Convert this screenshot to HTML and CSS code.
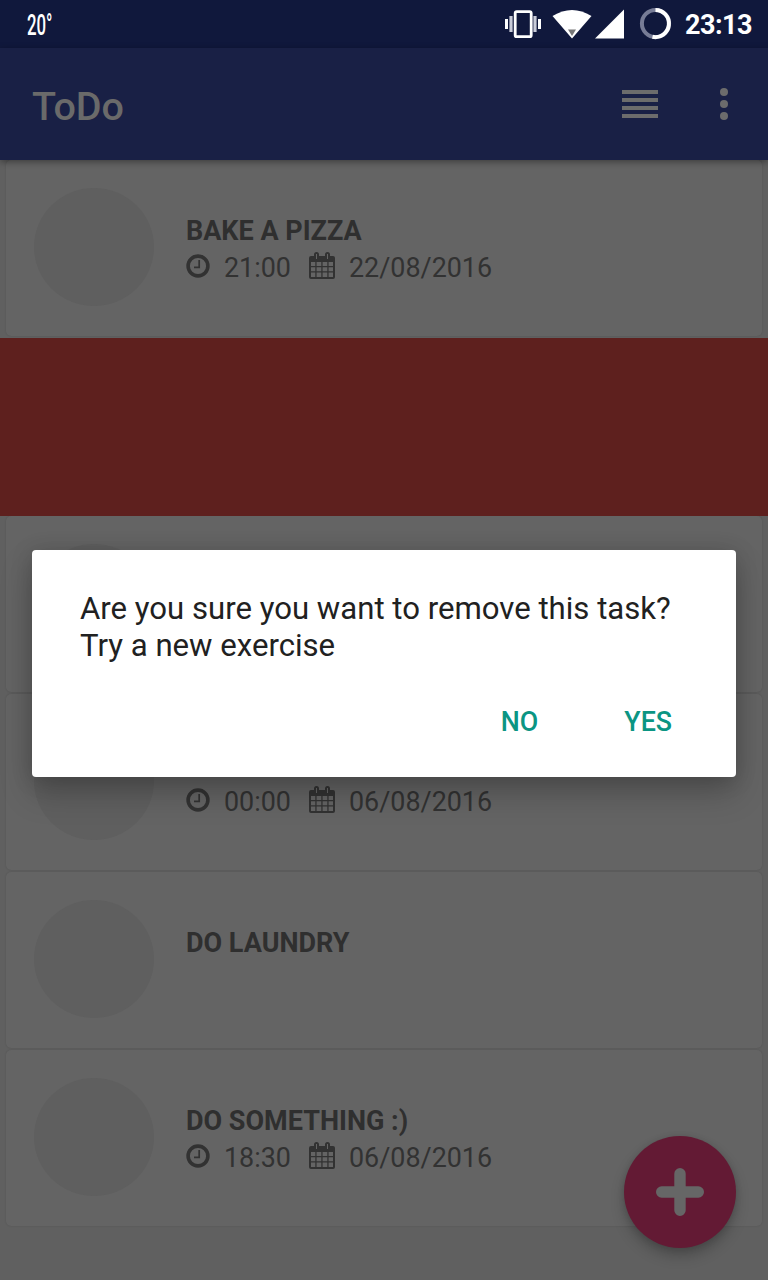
FILE: index.html
```html
<!DOCTYPE html>
<html lang="en">
<head>
<meta charset="utf-8">
<title>ToDo</title>
<link rel="stylesheet" href="styles.css">
</head>
<body>
<svg width="0" height="0" class="defs" aria-hidden="true">
  <symbol id="clock" viewBox="0 0 24 24">
    <circle cx="12" cy="12" r="9.900" fill="none" stroke="currentColor" stroke-width="3.600"/>
    <path d="M13.200 6v7.300H8" fill="none" stroke="currentColor" stroke-width="1.700"/>
  </symbol>
  <symbol id="calendar" viewBox="0 0 26 28">
    <path fill="currentColor" fill-rule="evenodd" d="M2 4h3V2.500a2.500 2.500 0 0 1 5 0V4h6V2.500a2.500 2.500 0 0 1 5 0V4h3a2 2 0 0 1 2 2v19a2 2 0 0 1-2 2H2a2 2 0 0 1-2-2V6a2 2 0 0 1 2-2zM7 2v5h1V2zM18 2v5h1V2zM2 10v4h4.300v-4zM7.600 10v4h4.700v-4zM13.600 10v4h4.700v-4zM19.600 10v4H24v-4zM2 15.300v4h4.300v-4zM7.600 15.300v4h4.700v-4zM13.600 15.300v4h4.700v-4zM19.600 15.300v4H24v-4zM2 20.600V25h4.300v-4.400zM7.600 20.600V25h4.700v-4.400zM13.600 20.600V25h4.700v-4.400zM19.600 20.600V25H24v-4.400z"/>
  </symbol>
</svg>
<div class="screen">
  <header class="status">
    <span class="temp">20°</span>
    <svg class="status-icons" width="170" height="48" viewBox="502 0 170 48">
      <rect x="515.200" y="11.700" width="16" height="25" rx="1.500" fill="none" stroke="#fff" stroke-width="2.800"/>
      <path d="M506.500 19v10M539.500 19v10" stroke="#fff" stroke-width="3"/>
      <path d="M511 16v16M535 16v16" stroke="#c8cbd8" stroke-width="3.200"/>
      <path d="M552.500 16Q572 4 591.500 16L572 38.500z" fill="#fff"/>
      <path d="M568 29.500h8L572 36z" fill="#777"/>
      <path d="M595 38.500L624 9.500v29z" fill="#fff"/>
      <circle cx="655.500" cy="23.500" r="13.600" fill="none" stroke="#777c96" stroke-width="4"/>
      <path d="M655.500 9.900a13.600 13.600 0 1 1-3 26.900" fill="none" stroke="#fff" stroke-width="4"/>
    </svg>
    <span class="time">23:13</span>
  </header>
  <nav class="toolbar">
    <h1 class="title">ToDo</h1>
    <svg class="menu-icon" width="36" height="28" viewBox="0 0 36 28"><path d="M0 2h36M0 10h36M0 18h36M0 26h36" stroke="#6c6c6c" stroke-width="4"/></svg>
    <svg width="8" height="32" viewBox="0 0 8 32" fill="#6c6c6c"><circle cx="4" cy="4" r="4"/><circle cx="4" cy="16" r="4"/><circle cx="4" cy="28" r="4"/></svg>
  </nav>
  <main class="list">
    <article class="card">
      <div class="avatar"></div>
      <div class="info">
        <h2 class="name">BAKE A PIZZA</h2>
        <div class="meta"><svg class="clock"><use href="#clock"/></svg><span class="hour">21:00</span><svg class="cal"><use href="#calendar"/></svg><span>22/08/2016</span></div>
      </div>
    </article>
    <div class="swiped"></div>
    <article class="card"><div class="avatar"></div></article>
    <article class="card">
      <div class="avatar"></div>
      <div class="info">
        <h2 class="name"></h2>
        <div class="meta"><svg class="clock"><use href="#clock"/></svg><span class="hour">00:00</span><svg class="cal"><use href="#calendar"/></svg><span>06/08/2016</span></div>
      </div>
    </article>
    <article class="card">
      <div class="avatar"></div>
      <div class="info"><h2 class="name">DO LAUNDRY</h2></div>
    </article>
    <article class="card">
      <div class="avatar"></div>
      <div class="info">
        <h2 class="name">DO SOMETHING :)</h2>
        <div class="meta"><svg class="clock"><use href="#clock"/></svg><span class="hour">18:30</span><svg class="cal"><use href="#calendar"/></svg><span>06/08/2016</span></div>
      </div>
    </article>
  </main>
  <div class="fab"><svg width="48" height="48" viewBox="0 0 48 48"><path d="M24 5.700v36.600M5.700 24h36.600" stroke="#666" stroke-width="11.400" stroke-linecap="round"/></svg></div>
  <section class="dialog">
    <p class="message">Are you sure you want to remove this task?<br>Try a new exercise</p>
    <div class="actions"><span>NO</span><span>YES</span></div>
  </section>
</div>
</body>
</html>
```
FILE: styles.css
```css
* { box-sizing: border-box; }
body { margin: 0; font-family: Roboto, sans-serif; background: #606060; }
h1, h2, p { margin: 0; }
.defs { position: absolute; }
.screen {
  position: relative;
  width: 768px;
  height: 1280px;
  overflow: hidden;
  display: flex;
  flex-direction: column;
  background: #606060;
}
.status {
  height: 48px;
  display: flex;
  align-items: center;
  padding: 0 16px 0 27px;
  background: #10183c;
  color: #fff;
}
.temp {
  flex: 1;
  font-size: 29px;
  font-weight: 500;
  line-height: 48px;
  padding-top: 1px;
  transform: scaleX(.58);
  transform-origin: left;
}
.status-icons { margin-right: 13px; }
.time { width: 67px; font-size: 27px; font-weight: 700; line-height: 48px; padding-top: 2px; letter-spacing: -.5px; white-space: nowrap; }
.toolbar {
  height: 112px;
  display: flex;
  align-items: center;
  padding: 0 40px 0 32px;
  background: #192045;
  box-shadow: 0 2px 7px rgba(0, 0, 0, .4);
  z-index: 1;
}
.title { flex: 1; font-size: 39.5px; font-weight: 500; line-height: 48px; color: #6a6a6a; padding-top: 5px; }
.menu-icon { margin-right: 62px; }
.list { display: flex; flex-direction: column; }
.card {
  height: 176px;
  margin: 0 6px 2px;
  padding: 28px;
  display: flex;
  gap: 32px;
  border-radius: 5px;
  background: #646464;
  box-shadow: 0 0 2px rgba(0, 0, 0, .14);
}
.swiped { height: 178px; background: #5e201e; position: relative; }
.avatar { width: 120px; height: 118px; border-radius: 50%; background: #5f5f5f; }
.info { padding-top: 25px; }
.name { height: 36px; font-size: 27px; font-weight: 700; line-height: 36px; color: #2f2f2f; }
.meta { height: 38px; display: flex; align-items: center; font-size: 26.9px; line-height: 38px; color: #323232; }
.clock { width: 24px; height: 24px; margin: -5px 14px 0 0; }
.cal { width: 26px; height: 28px; margin: -5px 14px 0 0; }
.hour { width: 85px; }
.fab {
  position: absolute;
  left: 624px;
  top: 1136px;
  width: 112px;
  height: 112px;
  border-radius: 50%;
  display: flex;
  align-items: center;
  justify-content: center;
  background: #631a34;
  box-shadow: 0 8px 14px rgba(0, 0, 0, .22), 0 1px 6px rgba(0, 0, 0, .12);
}
.dialog {
  position: absolute;
  left: 32px;
  top: 550px;
  width: 704px;
  height: 227px;
  padding: 40px 64px 0 48px;
  border-radius: 4px;
  background: #fff;
  box-shadow: 0 16px 32px rgba(0, 0, 0, .22), 0 2px 22px rgba(0, 0, 0, .15);
}
.message { font-size: 31.15px; line-height: 37px; color: #212121; white-space: nowrap; }
.actions {
  display: flex;
  justify-content: flex-end;
  gap: 86px;
  margin-top: 40px;
  font-size: 26.8px;
  font-weight: 500;
  line-height: 36px;
  color: #0b9583;
}
```
